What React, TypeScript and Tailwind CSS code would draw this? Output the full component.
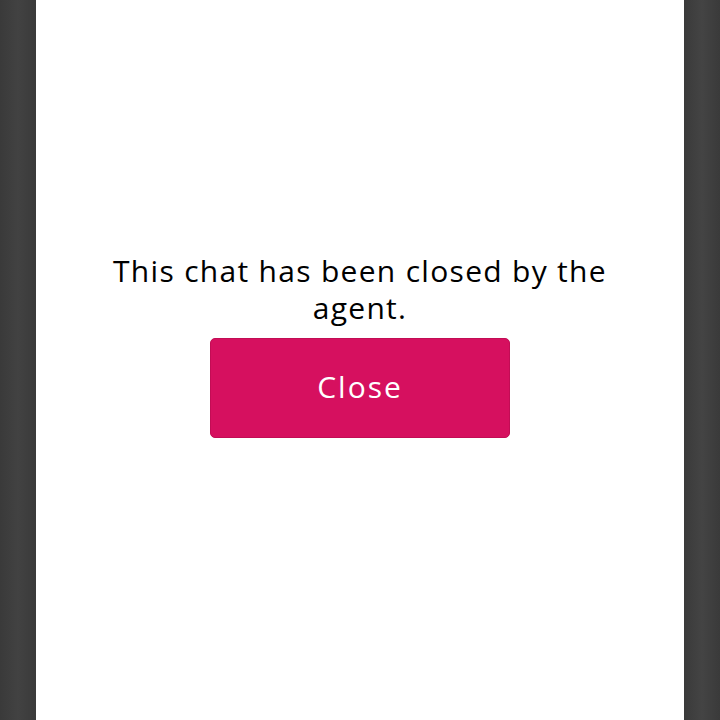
export default function App() {
  return (
    <div className="flex h-[720px] w-full overflow-hidden" style={{ fontFamily: "'Open Sans', Lato, sans-serif" }}>
      <div className="w-[36px] bg-gradient-to-r from-[#3a3a3a] via-[#424242] to-[#3a3a3a]" />
      <div className="flex flex-1 flex-col items-center bg-white pt-[252px]">
        <p className="w-[540px] text-center text-[30px] leading-[37px] tracking-[1.3px] text-black">
          This chat has been closed by the agent.
        </p>
        <button className="mt-[12px] h-[100px] w-[300px] rounded-[5px] border border-[#c20d55] bg-[#d6105f] pb-[4px] text-[30px] tracking-[2px] text-white">
          Close
        </button>
      </div>
      <div className="w-[36px] bg-gradient-to-r from-[#3a3a3a] via-[#444444] to-[#3a3a3a]" />
    </div>
  );
}
